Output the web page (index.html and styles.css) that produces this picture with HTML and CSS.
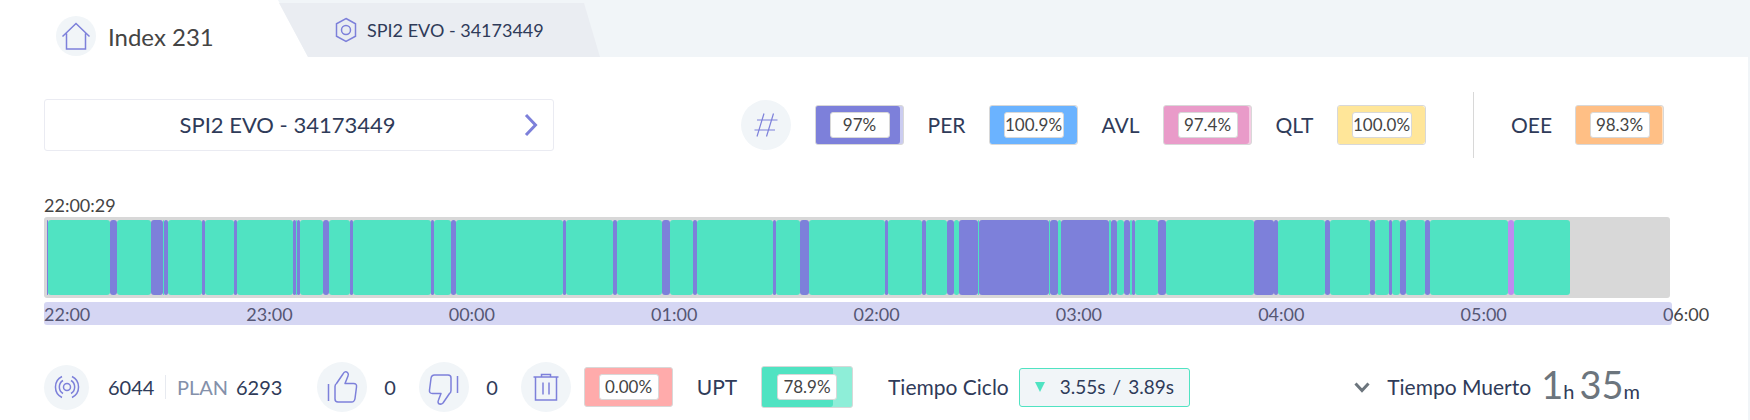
FILE: index.html
```html
<!DOCTYPE html>
<html lang="es">
<head>
<meta charset="utf-8">
<meta name="viewport" content="width=device-width, initial-scale=1">
<title>Index 231</title>
<link rel="stylesheet" href="styles.css">
</head>
<body>
<nav class="tabs">
  <a class="tab-home" href="#">
    <span class="disc disc-small"><svg class="icon" width="28" height="28" viewBox="0 0 28 28"><path d="M.5 14.500 14 1.500 27.500 14.500M4.500 11.500V27h19V11.500"/></svg></span>
    <span>Index 231</span>
  </a>
  <a class="tab-machine" href="#">
    <svg class="icon" width="22" height="26" viewBox="0 0 22 26"><path d="M11 1.500 20.500 6.800V19.200L11 24.500 1.500 19.200V6.800Z"/><circle cx="11" cy="13" r="4.500"/></svg>
    <span>SPI2 EVO - 34173449</span>
  </a>
</nav>
<main class="panel">
  <section class="row row-top">
    <button class="machine" type="button">
      <span class="machine-name">SPI2 EVO - 34173449</span>
      <svg class="icon icon-bold" width="14" height="22" viewBox="0 0 14 22"><path d="M2 1 11.500 11 2 21"/></svg>
    </button>
    <div class="metrics">
      <span class="disc"><svg class="icon icon-hash" width="24" height="24" viewBox="0 0 24 24"><path d="M10 .5 3 23.500M19.500.5 12.500 23.500M3 7H23.500M.5 17H21"/></svg></span>
      <span class="gauge purple"><span class="fill" style="width:97%"></span><span class="value">97%</span></span>
      <span class="label">PER</span>
      <span class="gauge blue"><span class="fill" style="width:100%"></span><span class="value">100.9%</span></span>
      <span class="label">AVL</span>
      <span class="gauge pink"><span class="fill" style="width:97.4%"></span><span class="value">97.4%</span></span>
      <span class="label">QLT</span>
      <span class="gauge yellow"><span class="fill" style="width:100%"></span><span class="value">100.0%</span></span>
      <span class="divider"></span>
      <span class="label label-oee">OEE</span>
      <span class="gauge orange"><span class="fill" style="width:98.3%"></span><span class="value">98.3%</span></span>
    </div>
  </section>

  <section class="timeline">
    <div class="start">22:00:29</div>
    <div class="track" id="track"></div>
    <div class="axis">
      <span>22:00</span><span>23:00</span><span>00:00</span><span>01:00</span><span>02:00</span><span>03:00</span><span>04:00</span><span>05:00</span><span>06:00</span>
    </div>
  </section>

  <section class="row row-bottom">
    <span class="disc disc-medium"><svg class="icon" width="26" height="24" viewBox="0 0 26 24"><circle cx="13" cy="12" r="3.500"/><path d="M9 5.500a7.600 7.600 0 0 0 0 13M17 5.500a7.600 7.600 0 0 1 0 13M8 1.500a11.700 11.700 0 0 0 0 21M18 1.500a11.700 11.700 0 0 1 0 21"/></svg></span>
    <span class="count">6044</span>
    <span class="plan">PLAN</span>
    <span class="target">6293</span>
    <span class="disc"><svg class="icon icon-thumb" width="32" height="34" viewBox="0 0 32 34"><path d="M2.500 14v17M9 16.500Q9 14.500 10.500 13.500L17 4Q19 .5 21.500 2.500 23 4 22 6L19 13.500H27.500Q31 13.500 30.500 17L29 28.500Q28.500 32 25.500 32H12Q9 32 9 29Z"/></svg></span>
    <span class="result">0</span>
    <span class="disc"><svg class="icon icon-thumb" width="32" height="34" viewBox="0 0 32 34"><path d="M29.500 6v17M23 20.500Q23 22.500 21.500 23.500L15 33Q13 35 10.500 33.500 9.500 32 10.500 30L13 23.500H4.500Q1 23.500 1.500 20L3 8.500Q3.500 5 6.500 5H20Q23 5 23 8Z"/></svg></span>
    <span class="result">0</span>
    <span class="disc scrap"><svg class="icon" width="26" height="28" viewBox="0 0 26 28"><path d="M.5 4h25M8.500 4V1.500h9V4M2.500 4v23h21V4M10 9.500v12M16 9.500v12"/></svg></span>
    <span class="gauge red"><span class="value">0.00%</span></span>
    <span class="label label-upt">UPT</span>
    <span class="gauge gauge-wide green"><span class="fill" style="width:78.9%"></span><span class="value">78.9%</span></span>
    <span class="cycle-label">Tiempo Ciclo</span>
    <span class="cycle">
      <svg width="10" height="10" viewBox="0 0 10 10"><path fill="#50e3c2" d="M0 0h10L5 10Z"/></svg>
      <span class="cycle-values"><span>3.55s</span><span>/</span><span>3.89s</span></span>
    </span>
    <button class="dead" type="button">
      <svg class="icon icon-grey" width="16" height="11" viewBox="0 0 16 11"><path d="M1.500 1.500 8 8.500 14.500 1.500"/></svg>
      <span class="dead-label">Tiempo Muerto</span>
      <span class="duration"><b>1</b>h <b>35</b>m</span>
    </button>
  </section>
</main>
<script src="timeline.js"></script>
</body>
</html>
```
FILE: styles.css
```css
* { box-sizing: border-box; }

body {
  margin: 0;
  background: #fff;
  color: #2f3b59;
  font: 20px/24px Lato, "Open Sans", sans-serif;
}

a { color: inherit; text-decoration: none; }
button { border: 0; padding: 0; background: none; color: inherit; font: inherit; cursor: pointer; }

.icon { display: block; flex: none; overflow: visible; fill: none; stroke: #7d80da; stroke-width: 1.5; }
.icon-thumb { stroke-linejoin: round; }
.icon-hash { stroke-width: 1.2; }
.icon-bold { stroke-width: 3; }
.icon-grey { stroke: #6c757d; stroke-width: 3; }

.tabs { display: flex; height: 57px; background: #f1f5f8; }
.tab-home {
  display: flex;
  gap: 12px;
  width: 308px;
  padding: 16px 0 0 56px;
  background: #fff;
  clip-path: polygon(0 0, 278px 0, 100% 100%, 0 100%);
  color: #444;
  font-size: 24px;
  line-height: 41px;
}
.tab-machine {
  display: flex;
  align-items: center;
  gap: 10px;
  width: 322px;
  margin: 3px 0 0 -30px;
  padding-left: 57px;
  background: #eaedf2;
  clip-path: polygon(1px 0, 306px 0, 100% 100%, 30px 100%);
  font-size: 18px;
}

.disc {
  display: flex;
  flex: none;
  align-items: center;
  justify-content: center;
  width: 50px;
  height: 50px;
  border-radius: 50%;
  background: #f1f5f8;
}
.disc-small { width: 40px; height: 40px; }
.disc-medium { width: 45px; height: 45px; }

.panel { padding: 35px 78px 8px 44px; border-right: 2px solid #f1f5f8; min-height: 363px; }
.row { display: flex; align-items: center; }
.row-top { height: 66px; }

.machine {
  display: flex;
  align-items: center;
  flex: 0 1 510px;
  height: 52px;
  padding-right: 15px;
  border: 1px solid #eaebf2;
  border-radius: 3px;
  font-size: 22px;
}
.machine-name { flex: 1; padding-left: 6px; }

.metrics { display: flex; align-items: center; margin-left: auto; padding-right: 6px; }
.metrics .disc { margin-right: 24px; }
.label { flex: none; width: 85px; text-align: center; font-size: 21px; }
.divider { width: 1px; height: 66px; margin-left: 47px; background: #d8d8d8; }
.label-oee { width: 101px; padding-left: 14px; }
.label-upt { width: 88px; }

.gauge {
  display: grid;
  flex: none;
  place-items: center;
  width: 89px;
  height: 40px;
  overflow: hidden;
  border: 1px solid #d8d8d8;
  border-radius: 3px;
}
.gauge-wide { width: 92px; height: 42px; }
.fill { grid-area: 1 / 1; justify-self: start; height: 100%; border-radius: 0 3px 3px 0; }
.value {
  grid-area: 1 / 1;
  width: 60px;
  height: 26px;
  border: 1px solid #d8d8d8;
  border-radius: 3px;
  background: #fff;
  color: #444;
  font-size: 17px;
  line-height: 24px;
  text-align: center;
}
.purple { background: #cbccf0; } .purple .fill { background: #7d80da; }
.blue .fill { background: #6bb3ff; }
.pink { background: #f5cce3; } .pink .fill { background: #e99bc9; }
.yellow .fill { background: #ffe699; }
.orange { background: #ffdfc0; } .orange .fill { background: #ffbf85; }
.red { background: #ffabab; }
.green { background: #8eeed8; } .green .fill { background: #50e3c2; }

.timeline { margin-top: 36px; font-size: 18px; line-height: 23px; }
.start { color: #444; }
.track {
  display: flex;
  height: 81px;
  padding: 3px;
  border-radius: 3px;
  background: #d8d8d8;
}
.segment { flex: 1 1 0; border-radius: 3px; }
.run { background: #50e3c2; }
.stop { background: #7d80da; }
.setup { background: #bd8cf0; }

.axis {
  display: flex;
  position: relative;
  height: 23px;
  margin: 4px -2px 0 0;
  color: #444;
  line-height: 25px;
}
.axis span { flex: 0 0 12.43%; white-space: nowrap; }
.axis span:last-child { flex: 0 0 0; }
.axis::after {
  content: "";
  position: absolute;
  inset: 0;
  border-radius: 3px;
  background: rgba(125, 128, 218, .32);
}

.row-bottom { margin-top: 37px; height: 50px; }
.count { flex: none; width: 58px; margin-left: 19px; border-right: 1px solid #e7eaf0; }
.plan { flex: none; width: 59px; margin-left: 11px; color: #8490aa; }
.target { flex: none; width: 81px; }
.result { flex: none; width: 52px; padding-right: 6px; text-align: center; }
.scrap { margin-right: 13px; }
.cycle-label { flex: none; margin-left: 35px; }
.cycle {
  display: flex;
  flex: none;
  align-items: center;
  gap: 15px;
  margin-left: 10px;
  padding: 0 15px;
  height: 39px;
  border: 1px solid #50e3c2;
  border-radius: 3px;
  background: #f1f5f8;
  font-size: 19px;
}
.cycle-values { display: flex; gap: 7px; }
.cycle-label, .dead-label { font-size: 21px; white-space: nowrap; }
.dead { display: flex; align-items: center; margin: 0 30px 0 auto; }
.dead-label { margin: 0 10px 0 17px; }
.duration { white-space: nowrap; line-height: 40px; }
.duration b { color: #6c757d; font-size: 38px; font-weight: 400; }
```
FILE: timeline.js
```js
// [state, length] pairs; lengths are relative shares of the shift.
const segments = [
  ["stop", 1], ["run", 62], ["stop", 7], ["run", 34], ["stop", 12], ["run", 1], ["stop", 4],
  ["run", 34], ["stop", 3], ["run", 29], ["stop", 3], ["run", 56], ["stop", 3], ["run", 1],
  ["stop", 3], ["run", 23], ["stop", 6], ["run", 21], ["stop", 3], ["run", 78], ["stop", 3],
  ["run", 17], ["stop", 5], ["run", 107], ["stop", 3], ["run", 47], ["stop", 4], ["run", 45],
  ["stop", 8], ["run", 23], ["stop", 4], ["run", 76], ["stop", 3], ["run", 24], ["stop", 9],
  ["run", 76], ["stop", 3], ["run", 34], ["stop", 4], ["run", 21], ["stop", 7], ["run", 5],
  ["stop", 19], ["run", 1], ["stop", 70], ["run", 1], ["stop", 8], ["run", 3], ["stop", 48],
  ["run", 2], ["stop", 6], ["run", 7], ["stop", 6], ["run", 2], ["stop", 3], ["run", 23],
  ["stop", 8], ["run", 88], ["stop", 20], ["stop", 4], ["run", 47], ["stop", 5], ["run", 40],
  ["stop", 5], ["run", 14], ["stop", 3], ["run", 8], ["stop", 6], ["run", 19], ["stop", 5],
  ["run", 78], ["setup", 6], ["run", 56], ["pending", 97]
];
const track = document.getElementById("track");
for (const [state, length] of segments) {
  const segment = document.createElement("span");
  segment.className = "segment " + state;
  segment.style.flexGrow = length;
  track.append(segment);
}
```
